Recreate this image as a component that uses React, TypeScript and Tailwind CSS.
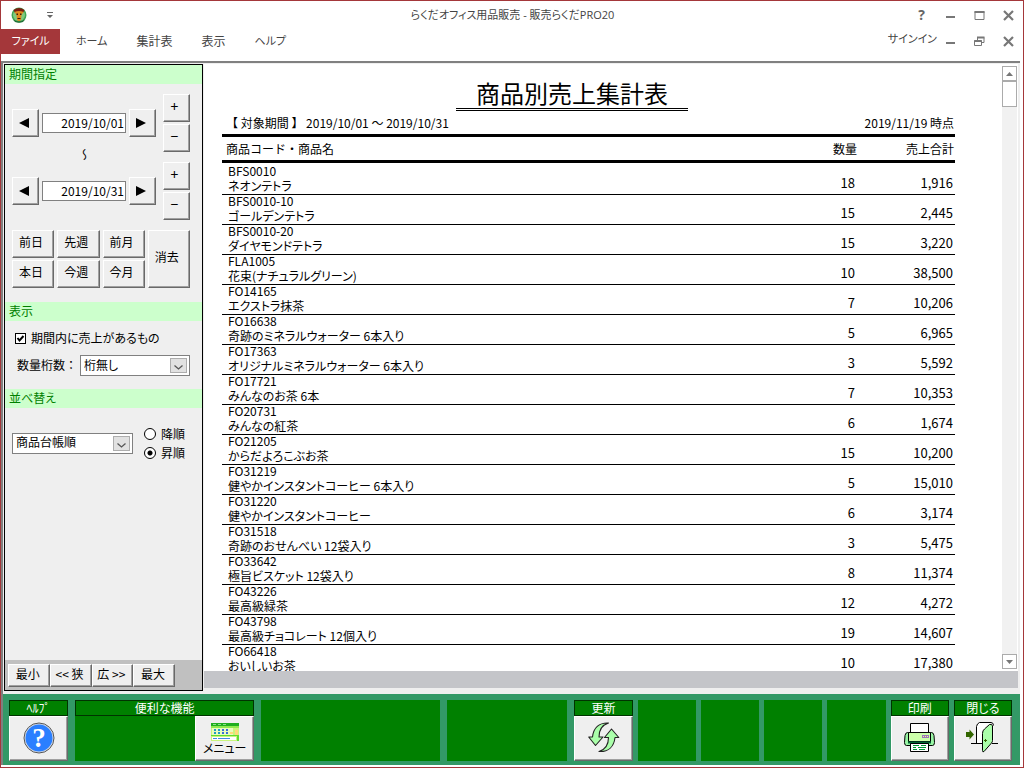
import React from "react";

type Product = {
  code: string;
  name: string;
  qty: string;
  total: string;
};

const products: Product[] = [
  { code: "BFS0010", name: "ネオンテトラ", qty: "18", total: "1,916" },
  { code: "BFS0010-10", name: "ゴールデンテトラ", qty: "15", total: "2,445" },
  { code: "BFS0010-20", name: "ダイヤモンドテトラ", qty: "15", total: "3,220" },
  { code: "FLA1005", name: "花束(ナチュラルグリーン)", qty: "10", total: "38,500" },
  { code: "FO14165", name: "エクストラ抹茶", qty: "7", total: "10,206" },
  { code: "FO16638", name: "奇跡のミネラルウォーター 6本入り", qty: "5", total: "6,965" },
  { code: "FO17363", name: "オリジナルミネラルウォーター 6本入り", qty: "3", total: "5,592" },
  { code: "FO17721", name: "みんなのお茶 6本", qty: "7", total: "10,353" },
  { code: "FO20731", name: "みんなの紅茶", qty: "6", total: "1,674" },
  { code: "FO21205", name: "からだよろこぶお茶", qty: "15", total: "10,200" },
  { code: "FO31219", name: "健やかインスタントコーヒー 6本入り", qty: "5", total: "15,010" },
  { code: "FO31220", name: "健やかインスタントコーヒー", qty: "6", total: "3,174" },
  { code: "FO31518", name: "奇跡のおせんべい 12袋入り", qty: "3", total: "5,475" },
  { code: "FO33642", name: "極旨ビスケット 12袋入り", qty: "8", total: "11,374" },
  { code: "FO43226", name: "最高級緑茶", qty: "12", total: "4,272" },
  { code: "FO43798", name: "最高級チョコレート 12個入り", qty: "19", total: "14,607" },
  { code: "FO66418", name: "おいしいお茶", qty: "10", total: "17,380" },
];

const bevel =
  "flex items-center justify-center bg-[#efefef] border border-t-white border-l-white border-r-[#696969] border-b-[#696969] shadow-[inset_-1px_-1px_0_#a0a0a0]";

type ChildProps = { children?: React.ReactNode };

const CamelLogo = () => (
  <svg width="16" height="16" viewBox="0 0 16 16">
    <circle cx="8" cy="8" r="7.5" fill="#3fa552" />
    <circle cx="8" cy="8" r="6" fill="#7fca7f" />
    <path d="M2.500 3 Q8 -1 13.500 3 L12 6 Q8 3.5 4 6Z" fill="#7a1d12" />
    <path d="M3.5 5 Q8 3 12.5 5 L10.5 8 L10 13 Q8 15 6 13 L5.500 8Z" fill="#e08a1e" />
    <path d="M5.500 6.500h1.500v1.500h-1.500zM9 6.500h1.500v1.500h-1.500zM6.500 11h3v1h-3z" fill="#3b1d0a" />
    <path d="M1.5 12 Q8 17 14.5 12 L12 15 Q8 16.5 4 15Z" fill="#1f6b33" />
  </svg>
);

const MinimizeIcon = () => (
  <svg width="11" height="11" viewBox="0 0 11 11">
    <path d="M1 6h9v2h-9z" fill="#777" />
  </svg>
);

const MaximizeIcon = () => (
  <svg width="11" height="11" viewBox="0 0 11 11">
    <path d="M1 1.5h9v8h-9z" fill="none" stroke="#777" />
    <path d="M.5 1h10v2h-10z" fill="#777" />
  </svg>
);

const RestoreIcon = () => (
  <svg width="11" height="11" viewBox="0 0 11 11" fill="none" stroke="#777">
    <path d="M3.5 4V1.5h6.5v5H8" />
    <path d="M3 1.5h7.5" strokeWidth="2" />
    <path d="M.5 4.5h7v5h-7z" />
    <path d="M.5 5h7" strokeWidth="2" />
  </svg>
);

const CloseIcon = () => (
  <svg width="11" height="11" viewBox="0 0 11 11">
    <path d="M1 1l9 9M10 1l-9 9" stroke="#777" strokeWidth="2.2" />
  </svg>
);

const HelpIcon = () => (
  <svg width="32" height="32" viewBox="0 0 32 32">
    <circle cx="16" cy="16" r="15" fill="#d5dce8" stroke="#555" />
    <circle cx="16" cy="16" r="13.5" fill="#2a7fff" />
    <text x="16" y="25" textAnchor="middle" fill="#fff" fontSize="27" fontWeight="700" fontFamily="Liberation Serif, serif">
      ?
    </text>
  </svg>
);

const MenuIcon = () => (
  <svg width="28" height="18" viewBox="0 0 28 18" shapeRendering="crispEdges">
    <path d="M0 0h28v18h-28z" fill="#c9f57c" />
    <path d="M0 0h28v3h-28z" fill="#1fae1f" />
    <path d="M2 1h3v1h-3zM7 1h3v1h-3zM12 1h3v1h-3z" fill="#8be08b" />
    <path d="M0 3h28v2h-28z" fill="#8fea4f" />
    <path d="M1 5h21v7h-21z" fill="#e8fcc0" />
    <path d="M3 6h2v2h-2zM7 6h2v2h-2zM3 9h2v2h-2zM7 9h2v2h-2z" fill="#1e9ec4" />
    <path d="M11 6h2v2h-2zM15 6h2v2h-2zM11 9h2v2h-2zM15 9h2v2h-2z" fill="#3770d8" />
    <path d="M19 9h3v2h-3zM24 7h3v5h-3z" fill="#ffd97a" />
    <path d="M1 14h24v3h-24z" fill="#fff" />
    <path d="M2 15h4v1h-4zM7 15h12v1h-12z" fill="#3f8fe0" />
    <path d="M0 12h28v1h-28zM26 13h2v5h-2z" fill="#5fdc2f" />
  </svg>
);

const RefreshIcon = () => (
  <svg width="32" height="31" viewBox="0 0 32 31" fill="#aaffaa" stroke="#222" strokeWidth="1.1" strokeLinejoin="round">
    <path d="M20.5 1C11 .5 5.500 6 4.500 15H.7l6.800 8.500L15 15h-4c0-6.500 3-12 9.500-14z" />
    <path d="M11 29.500c9.500.5 15-5 16-14h3.800L23.500 7l-7 8.500h4c0 6.500-3 12-9.500 14z" />
  </svg>
);

const PrinterIcon = () => (
  <svg width="32" height="30" viewBox="0 0 32 30" stroke="#000">
    <path d="M6.500 .5h18v10h-18z" fill="#fff" />
    <path d="M4.500 9.500h-1q-2 0-2.500 3l-.5 7q0 3 2 3h4v-4h-2zM26.500 9.500h1q2 0 2.500 3l.5 7q0 3-2 3h-4v-4h2z" fill="#99f5a5" />
    <path d="M4.500 9.500h22v9h-22z" fill="#ccffaa" />
    <path d="M4 19.500h23" stroke="#006633" strokeWidth="2" />
    <path d="M6.500 20.500h18v8h-18z" fill="#fff" />
    <path d="M9 22.500h6M17 22.500h5M9 24.500h3M14 24.500h8M9 26.500h4M15 26.500h6" stroke="#009933" />
    <path d="M18 12h7v3h-7z" fill="#9977bb" stroke="none" />
    <path d="M19 13h1v1h-1zM21 13h1v1h-1zM23 13h1v1h-1z" fill="#ffee99" stroke="none" />
  </svg>
);

const DoorIcon = () => (
  <svg width="33" height="32" viewBox="0 0 33 32" stroke="#000">
    <path d="M10.500 21.500v-17q0-3 3-4h14v21z" fill="#fff" stroke="none" />
    <path d="M5 21.500h11.500M10.500 21.500v-17q.5-3 3-4h11.500q2.500 0 2.500 3" fill="none" />
    <path d="M26 21.500h6" />
    <path d="M16.500 11.500q0-3 2-4.500l5-4.500q2.500-1 3 1.500v14.500q0 1.500-1 2.500l-7.500 8.500q-1.500 1-1.500-1z" fill="#aaffaa" />
    <path d="M18 18.500h3M19.500 17v3" stroke="#336600" />
    <path d="M0 10h3.500v-2.500l4.500 5-4.500 5v-2.500h-3.500z" fill="#336600" stroke="none" />
  </svg>
);

const SectionTitle = ({ children }: ChildProps) => (
  <h2 className="bg-[#ccffcc] text-[#008000] text-xs leading-[17px] pb-[2px] pl-1">{children}</h2>
);

const DateRow = ({ label, value }: { label: string; value: string }) => (
  <div className="flex items-center gap-[3px]">
    <button aria-label={`${label}を戻す`} className={`${bevel} w-[27px] h-7 pr-1`}>
      <svg width="10" height="10" viewBox="0 0 10 10">
        <path d="M10 0v10L0 5z" />
      </svg>
    </button>
    <input
      aria-label={label}
      defaultValue={value}
      className="w-[84px] h-5 bg-white border border-[#808080] text-right text-xs pr-px pb-[2px]"
    />
    <button aria-label={`${label}を進める`} className={`${bevel} w-[27px] h-7 pr-1`}>
      <svg width="10" height="10" viewBox="0 0 10 10">
        <path d="M0 0v10l10-5z" />
      </svg>
    </button>
  </div>
);

const SelectBox = ({ id, label, value }: { id: string; label?: string; value: string }) => (
  <div className="relative flex-1">
    <select
      id={id}
      aria-label={label}
      className="appearance-none block w-full h-[21px] bg-white border border-[#808080] text-xs pl-[3px] pb-[2px] rounded-none"
    >
      <option>{value}</option>
    </select>
    <span className="absolute right-[3px] top-[3px] w-[17px] h-[15px] bg-[#e1e1e1] border border-[#adadad] flex items-end justify-center pb-[2px] pointer-events-none">
      <svg width="9" height="5" viewBox="0 0 9 5">
        <path d="M.5 .5l4 3.500 4-3.500" fill="none" stroke="#555" strokeWidth="1.3" />
      </svg>
    </span>
  </div>
);

const SortRadio = ({ text, checked }: { text: string; checked?: boolean }) => (
  <label className="flex items-center gap-[5px] text-xs leading-[19px]">
    <input
      type="radio"
      name="sort"
      defaultChecked={checked}
      className="appearance-none w-3 h-3 rounded-full border border-black bg-white checked:bg-[radial-gradient(circle,#000_2px,#fff_3px)]"
    />
    {text}
  </label>
);

const Sidebar = () => (
  <aside className="w-[199px] shrink-0 flex flex-col mb-[3px] border border-black bg-[#efefef]">
    <SectionTitle>期間指定</SectionTitle>
    <div className="flex gap-[7px] pl-[7px] pt-[10px]">
      <div className="pt-[15px]">
        <DateRow label="開始日" value="2019/10/01" />
        <div className="h-10 flex items-center justify-center pb-1 text-xs">
          <span className="[writing-mode:vertical-rl]">～</span>
        </div>
        <DateRow label="終了日" value="2019/10/31" />
      </div>
      <div className="flex flex-col gap-[10px]">
        {["開始", "終了"].map((item) => (
          <div key={item} className="flex flex-col gap-[2px]">
            <button className={`${bevel} w-[27px] h-7 text-sm pr-1 pb-1`}>+</button>
            <button className={`${bevel} w-[27px] h-7 text-sm pr-1 pb-1`}>−</button>
          </div>
        ))}
      </div>
    </div>
    <div className="grid grid-cols-4 grid-rows-[28px_28px] gap-x-[3px] gap-y-[2px] ml-[7px] mr-3 mt-[10px] text-xs">
      <button className={`${bevel} pr-1 pb-1`}>前日</button>
      <button className={`${bevel} pr-1 pb-1`}>先週</button>
      <button className={`${bevel} pr-1 pb-1`}>前月</button>
      <button className={`${bevel} pr-1 pb-1 row-span-2`}>消去</button>
      <button className={`${bevel} pr-1 pb-1`}>本日</button>
      <button className={`${bevel} pr-1 pb-1`}>今週</button>
      <button className={`${bevel} pr-1 pb-1`}>今月</button>
    </div>
    <div className="mt-[14px]">
      <SectionTitle>表示</SectionTitle>
    </div>
    <label className="flex items-center gap-[5px] pl-[10px] pt-2 text-xs leading-[18px]">
      <span className="grid">
        <input
          type="checkbox"
          defaultChecked
          className="peer col-start-1 row-start-1 appearance-none w-[11px] h-[11px] border border-black bg-white"
        />
        <svg width="11" height="11" viewBox="0 0 11 11" className="col-start-1 row-start-1 pointer-events-none hidden peer-checked:block">
          <path d="M2.500 5l2 2.500 4-4.500" fill="none" stroke="#000" strokeWidth="2" />
        </svg>
      </span>
      期間内に売上があるもの
    </label>
    <div className="flex items-center pl-3 pr-3 mt-2 text-xs">
      <label htmlFor="digits" className="w-[63px] pb-[2px] whitespace-nowrap [font-feature-settings:normal]">数量桁数：</label>
      <SelectBox id="digits" value="桁無し" />
    </div>
    <div className="mt-[13px]">
      <SectionTitle>並べ替え</SectionTitle>
    </div>
    <div className="flex items-center gap-[11px] pl-[7px] pr-[17px] mt-4">
      <SelectBox id="order" label="並べ替え" value="商品台帳順" />
      <div>
        <SortRadio text="降順" />
        <SortRadio text="昇順" checked />
      </div>
    </div>
    <div className="mt-auto bg-[#c0c0c0] pl-[3px] pt-1 pb-[3px] text-xs">
      <div className="w-[167px] h-[23px] flex">
        <button className={`${bevel} flex-1 pr-0.5 pb-1`}>最小</button>
        <button className={`${bevel} flex-1 pr-0.5 pb-1`}>&lt;&lt; 狭</button>
        <button className={`${bevel} flex-1 pr-0.5 pb-1`}>広 &gt;&gt;</button>
        <button className={`${bevel} flex-1 pr-0.5 pb-1`}>最大</button>
      </div>
    </div>
  </aside>
);

const Report = () => (
  <div className="flex-1 min-h-0 min-w-0 overflow-hidden bg-white pl-[18px] pr-[47px] pt-[17px] [font-feature-settings:normal]">
    <div className="flex justify-center pr-[33px]">
      <h1 className="text-2xl leading-[24px] px-5 pb-[3px] border-b-[3px] border-double border-black">
        商品別売上集計表
      </h1>
    </div>
    <div className="flex justify-between text-xs leading-[17px] pl-1 pr-px pt-[3px] pb-[3px]">
      <span>【 対象期間 】 2019/10/01 ～ 2019/10/31</span>
      <span>2019/11/19 時点</span>
    </div>
    <table className="w-full border-separate border-spacing-0 text-xs">
      <thead>
        <tr className="leading-[23px] [&>th]:font-normal [&>th]:p-0 [&>th]:border-y-[3px] [&>th]:border-black">
          <th className="text-left"><span className="pl-1">商品コード・商品名</span></th>
          <th className="text-right w-20">数量</th>
          <th className="text-right w-[98px]"><span className="pr-px">売上合計</span></th>
        </tr>
      </thead>
      <tbody className="[&_td]:p-0 [&_td]:border-b [&_td]:border-black">
        <tr aria-hidden="true" className="[&>td]:h-[2px] [&>td]:border-none!">
          <td colSpan={3}></td>
        </tr>
        {products.map((item) => (
          <tr key={item.code}>
            <td className="[font-feature-settings:'palt']">
              <div className="pl-1.5 leading-[12px]">{item.code}</div>
              <div className="pl-1.5 leading-[17px]">{item.name}</div>
            </td>
            <td className="text-right text-[13px] leading-[22px] align-bottom"><span className="pr-[2px]">{item.qty}</span></td>
            <td className="text-right text-[13px] leading-[22px] align-bottom"><span className="pr-[2px]">{item.total}</span></td>
          </tr>
        ))}
      </tbody>
    </table>
  </div>
);

const ScrollBar = () => (
  <div className="w-[15px] shrink-0 flex flex-col bg-[#f1f1f1] mt-[2px] mb-[2px] mr-px">
    <button aria-label="上へ" className="h-[15px] bg-white border border-[#ababab] flex items-center justify-center">
      <svg width="7" height="4" viewBox="0 0 7 4">
        <path d="M0 4l3.500-4L7 4z" fill="#777" />
      </svg>
    </button>
    <div className="h-[26px] bg-white border border-[#ababab]"></div>
    <button aria-label="下へ" className="mt-auto h-[15px] bg-white border border-[#ababab] flex items-center justify-center">
      <svg width="7" height="4" viewBox="0 0 7 4">
        <path d="M0 0l3.500 4L7 0z" fill="#777" />
      </svg>
    </button>
  </div>
);

const Caption = ({ children }: ChildProps) => (
  <div className="h-4 bg-[#008000] border border-[#003300] text-white text-xs leading-[13px] text-center whitespace-nowrap">
    {children}
  </div>
);

const Tool = ({ caption, children }: { caption: string; children: React.ReactNode }) => (
  <div className="flex-1 flex flex-col">
    <Caption>{caption}</Caption>
    <button aria-label={caption} className={`${bevel} flex-1 pb-0.5`}>
      {children}
    </button>
  </div>
);

const Footer = () => (
  <footer className="h-[71px] shrink-0 flex gap-[7px] bg-[#339966] pl-1.5 pr-2 pt-1.5 pb-1">
    <div className="flex-[559] flex gap-[7px]">
      <div className="flex-[59] flex">
        <Tool caption="ﾍﾙﾌﾟ">
          <HelpIcon />
        </Tool>
      </div>
      <div className="flex-[179] flex flex-col bg-[#008000]">
        <Caption>便利な機能</Caption>
        <button className={`${bevel} self-end flex-1 w-[59px] flex-col text-xs leading-[14px]`}>
          <MenuIcon />
          メニュー
        </button>
      </div>
      <div className="flex-[179] bg-[#008000]"></div>
      <div className="flex-[120] bg-[#008000]"></div>
    </div>
    <div className="flex-[438] flex gap-[5px]">
      <Tool caption="更新">
        <RefreshIcon />
      </Tool>
      <div className="flex-1 bg-[#008000]"></div>
      <div className="flex-1 bg-[#008000]"></div>
      <div className="flex-1 bg-[#008000]"></div>
      <div className="flex-1 bg-[#008000]"></div>
      <Tool caption="印刷">
        <PrinterIcon />
      </Tool>
      <Tool caption="閉じる">
        <DoorIcon />
      </Tool>
    </div>
  </footer>
);

const TitleBar = () => (
  <header className="h-[60px] shrink-0 bg-white text-[#444] text-[11px] font-['Open_Sans','Noto_Sans_CJK_JP',sans-serif]">
    <div className="h-7 flex items-center pl-[10px] pr-[9px]">
      <div className="flex-1 flex items-center gap-[20px]">
        <CamelLogo />
        <button aria-label="クイック アクセス">
          <svg width="6" height="6" viewBox="0 0 6 6">
            <path d="M0 0h6v1h-6zM0 3h6l-3 3z" fill="#666" />
          </svg>
        </button>
      </div>
      <div>らくだオフィス用品販売 - 販売らくだPRO20</div>
      <div className="flex-1 flex items-center justify-end gap-[18px]">
        <button aria-label="ヘルプ" className="w-[11px] text-sm leading-4 font-bold text-[#666]">?</button>
        <button aria-label="最小化"><MinimizeIcon /></button>
        <button aria-label="最大化"><MaximizeIcon /></button>
        <button aria-label="閉じる"><CloseIcon /></button>
      </div>
    </div>
    <div className="h-[25px] flex items-center pr-[9px]">
      <button className="w-[59px] h-full bg-[#a4373a] text-white">ファイル</button>
      <nav className="flex-1 flex items-center gap-[29px] pl-4">
        <button>ホーム</button>
        <button className="text-xs">集計表</button>
        <button className="text-xs">表示</button>
        <button>ヘルプ</button>
      </nav>
      <a href="#" className="mr-[8px] pb-1">サインイン</a>
      <div className="flex gap-[18px]">
        <button aria-label="ウィンドウを最小化"><MinimizeIcon /></button>
        <button aria-label="元のサイズに戻す"><RestoreIcon /></button>
        <button aria-label="ウィンドウを閉じる"><CloseIcon /></button>
      </div>
    </div>
  </header>
);

export default function App() {
  return (
    <div className="h-screen flex flex-col border border-[#a4373a] bg-white text-black font-['Noto_Sans_CJK_JP',sans-serif] [font-feature-settings:'palt']">
      <TitleBar />
      <div className="flex-1 min-h-0 flex flex-col mr-[3px] mb-[2px] border-t-2 border-l-2 border-[#808080] bg-[#efefef]">
        <main className="flex-1 min-h-0 flex pl-px pt-px">
          <Sidebar />
          <div className="flex-1 min-w-0 flex flex-col ml-px mr-[2px] mb-1.5">
            <div className="flex-1 min-h-0 flex bg-white">
              <Report />
              <ScrollBar />
            </div>
            <div className="h-[17px] shrink-0 bg-[#c4c5c9]"></div>
          </div>
        </main>
        <Footer />
      </div>
    </div>
  );
}
